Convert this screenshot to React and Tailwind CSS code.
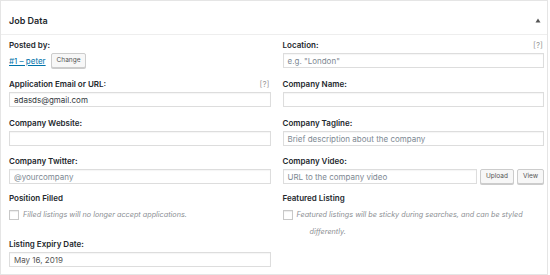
import React from "react";

const font = { fontFamily: "Inter, 'Noto Sans', sans-serif" };

function Label({ children, help }) {
  return (
    <div className="flex items-center justify-between h-[12px] leading-[12px] text-[8px] font-semibold text-[#23282d]">
      <span>{children}</span>
      {help && <span className="font-normal text-[#999] pr-[1px]">[?]</span>}
    </div>
  );
}

function Input({ value, placeholder, className = "" }) {
  return (
    <div
      className={`mt-[2px] h-[15px] border border-[#dddddd] bg-white shadow-[inset_0_1px_1px_rgba(0,0,0,0.04)] px-[4px] flex items-center text-[8px] leading-[10px] ${
        value ? "text-[#32373c]" : "text-[#7e8993]"
      } ${className}`}
    >
      {value || placeholder}
    </div>
  );
}

function Btn({ children }) {
  return (
    <div className="h-[15px] px-[5px] border border-[#cccccc] bg-[#f7f7f7] rounded-[2px] text-[6.5px] text-[#555] flex items-center shadow-[0_1px_0_#ccc]">
      {children}
    </div>
  );
}

function Check() {
  return (
    <div className="w-[10px] h-[10px] border border-[#c8c8c8] bg-white shrink-0 shadow-[inset_0_1px_1px_rgba(0,0,0,0.08)]" />
  );
}

export default function App() {
  return (
    <div className="w-[550px] h-[275px] bg-white" style={font}>
      <div className="w-[548px] h-[275px] border border-[#e5e5e5] bg-white">
        <div className="h-[34px] border-b border-[#eeeeee] pl-[8px] pr-[6px] pt-[14px] flex justify-between">
          <span className="text-[9px] leading-[12px] font-semibold text-[#23282d]">Job Data</span>
          <svg width="6" height="5" viewBox="0 0 6 5" className="mt-[3px]">
            <path d="M3 0.5 L5.5 4.5 L0.5 4.5 Z" fill="#555" />
          </svg>
        </div>
        <div className="pl-[8px] pr-[3px] pt-[4px] grid grid-cols-2 gap-x-[12px] grid-rows-[39px_39px_38px_37px_46px_auto]">
          <div>
            <Label>Posted by:</Label>
            <div className="mt-[2px] flex items-center gap-[5px]">
              <a className="text-[8px] text-[#0073aa] underline">#1 – peter</a>
              <Btn>Change</Btn>
            </div>
          </div>
          <div>
            <Label help>Location:</Label>
            <Input placeholder={'e.g. "London"'} />
          </div>
          <div>
            <Label help>Application Email or URL:</Label>
            <Input value="adasds@gmail.com" />
          </div>
          <div>
            <Label>Company Name:</Label>
            <Input />
          </div>
          <div>
            <Label>Company Website:</Label>
            <Input />
          </div>
          <div>
            <Label>Company Tagline:</Label>
            <Input placeholder="Brief description about the company" />
          </div>
          <div>
            <Label>Company Twitter:</Label>
            <Input placeholder="@yourcompany" />
          </div>
          <div>
            <Label>Company Video:</Label>
            <div className="flex items-start gap-[3px]">
              <Input placeholder="URL to the company video" className="flex-1" />
              <div className="mt-[2px]"><Btn>Upload</Btn></div>
              <div className="mt-[2px]"><Btn>View</Btn></div>
            </div>
          </div>
          <div>
            <Label>Position Filled</Label>
            <div className="mt-[6px] flex items-center gap-[4px]">
              <Check />
              <span className="text-[7.25px] italic text-[#8c8f94]">Filled listings will no longer accept applications.</span>
            </div>
          </div>
          <div>
            <Label>Featured Listing</Label>
            <div className="mt-[6px] flex items-center gap-[4px]">
              <Check />
              <span className="text-[7.25px] italic text-[#8c8f94]">Featured listings will be sticky during searches, and can be styled</span>
            </div>
            <div className="mt-[6px] pl-[27px] text-[7.25px] italic text-[#8c8f94] leading-[10px]">differently.</div>
          </div>
          <div>
            <Label>Listing Expiry Date:</Label>
            <Input value="May 16, 2019" className="!text-[#555]" />
          </div>
          <div />
        </div>
      </div>
    </div>
  );
}
